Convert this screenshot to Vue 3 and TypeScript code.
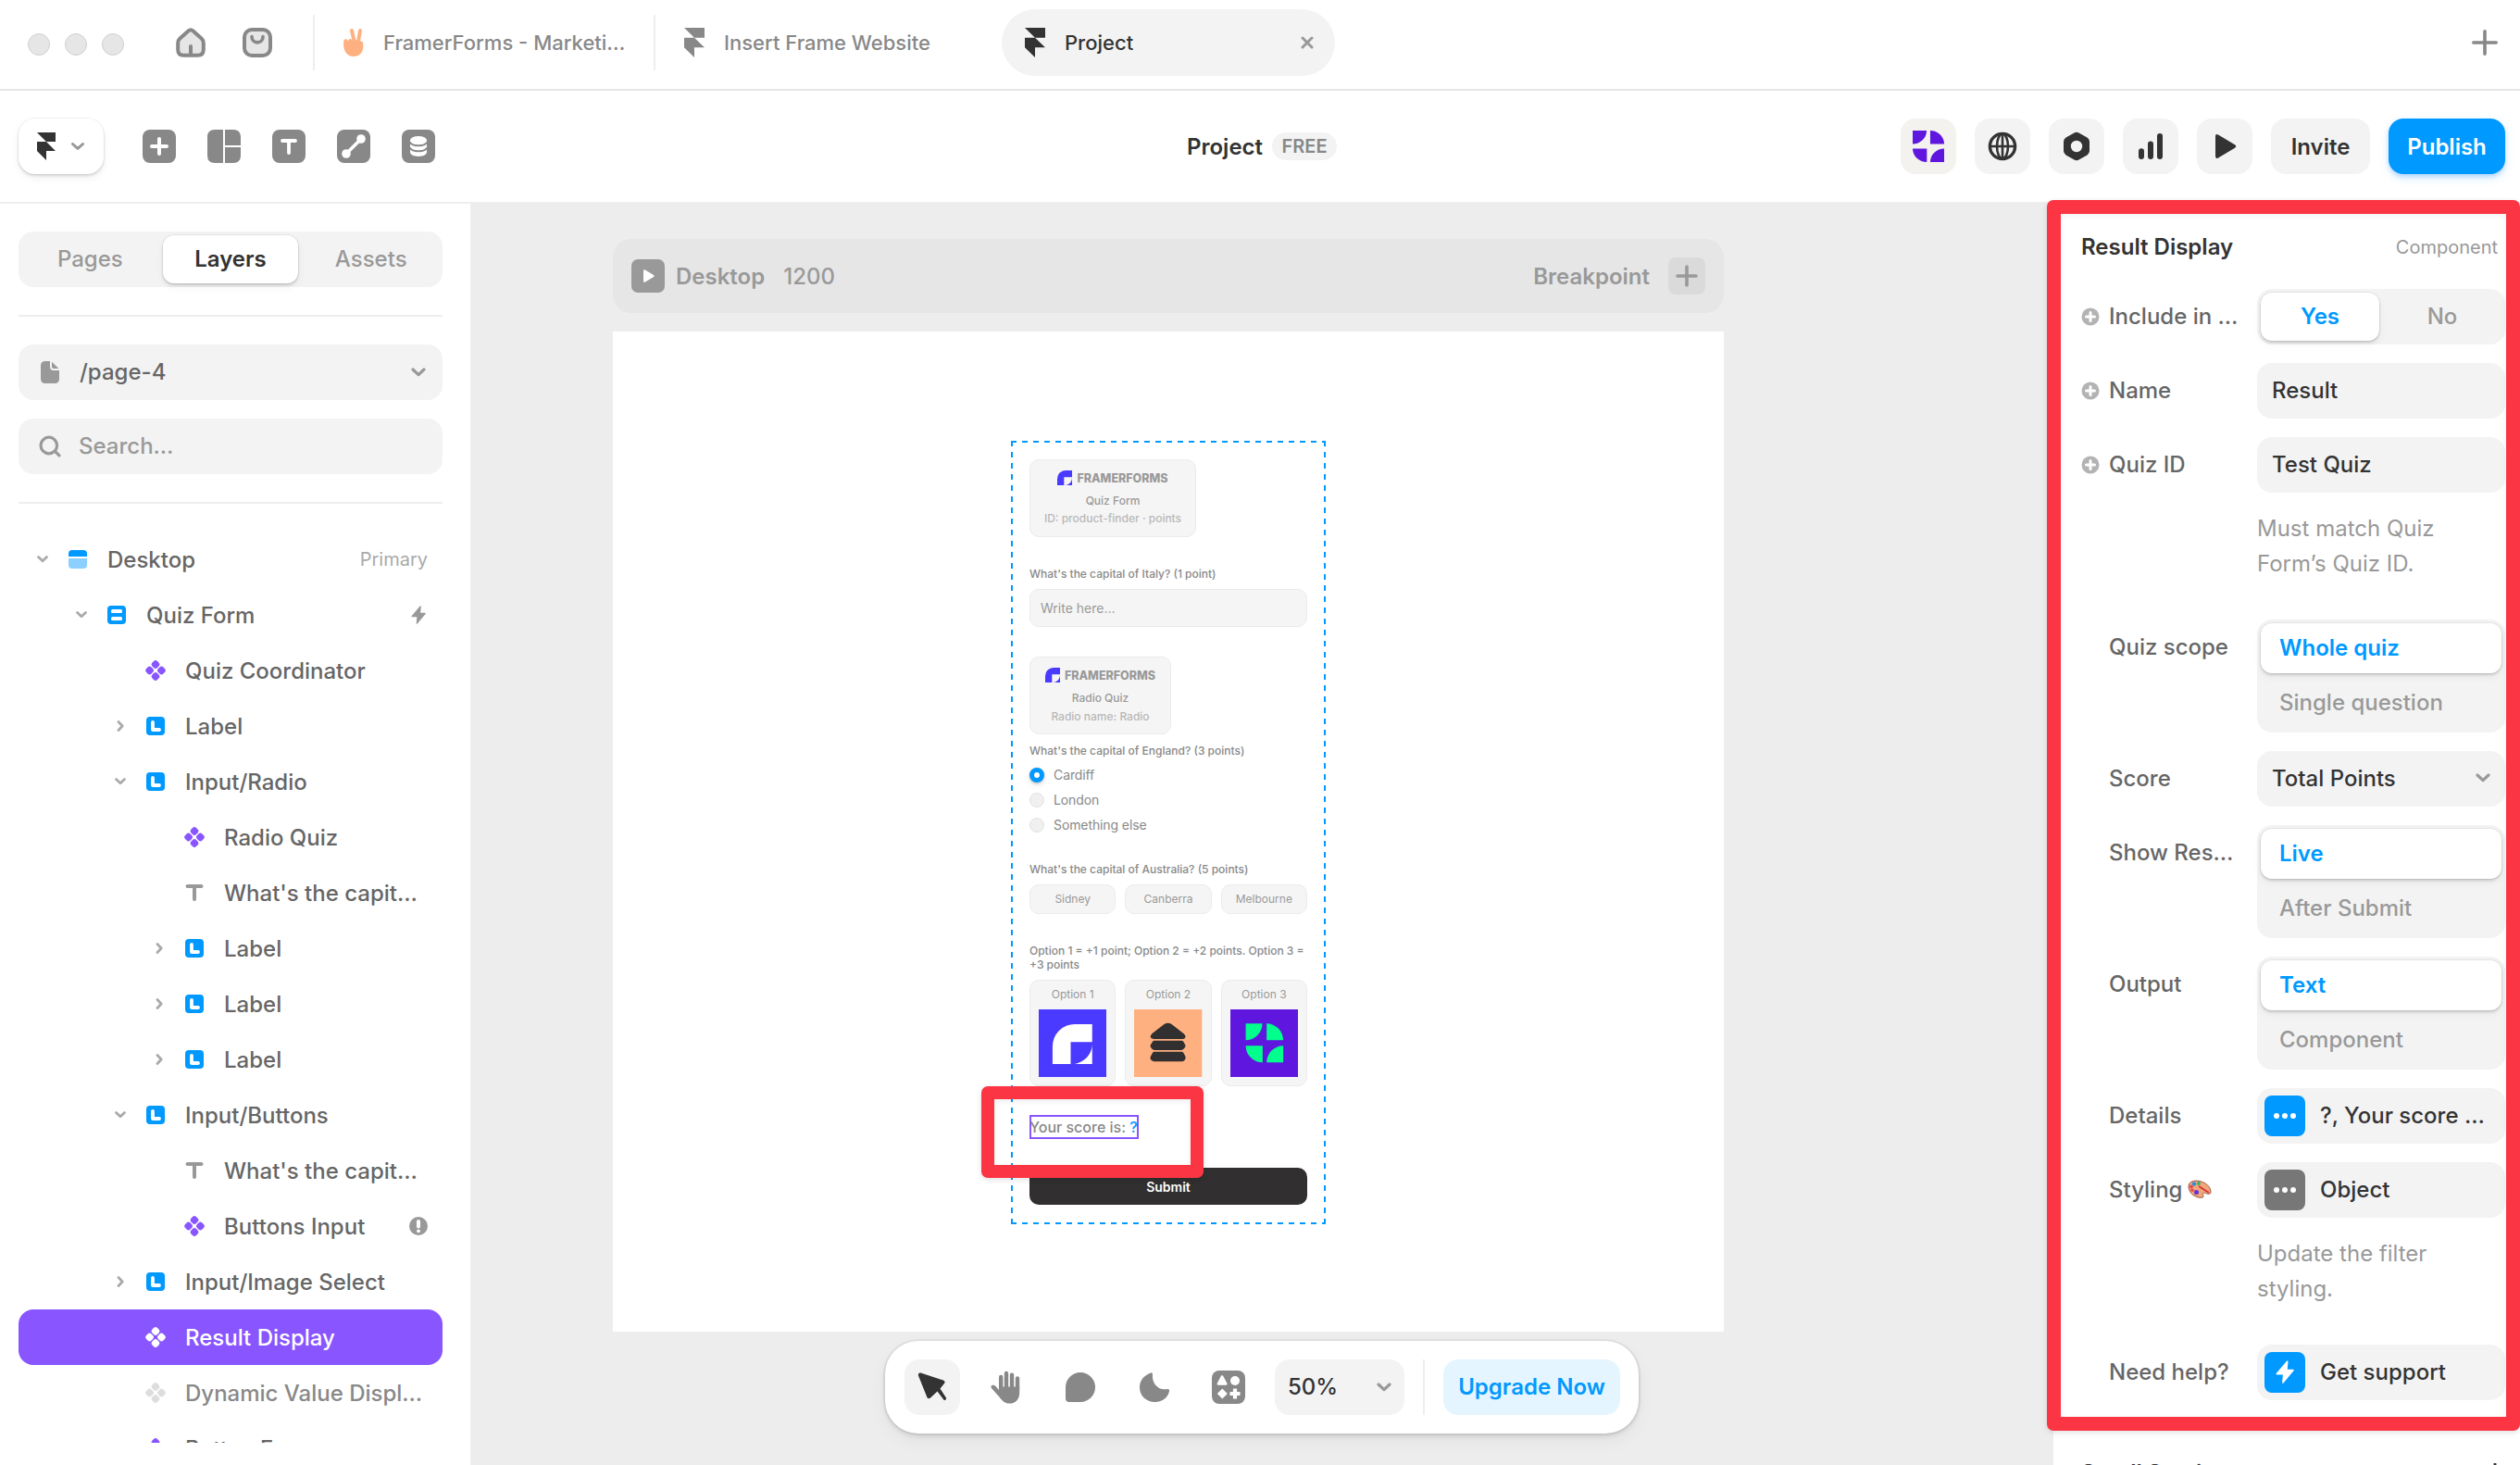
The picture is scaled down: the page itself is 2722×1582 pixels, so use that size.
<script setup lang="ts">
type RowIcon = 'page' | 'form' | 'component' | 'frame' | 'text'

interface TreeRow {
  label: string
  level: number
  icon: RowIcon
  chevron?: 'open' | 'closed'
  note?: string
  badge?: 'bolt' | 'alert'
  selected?: boolean
  hidden?: boolean
}

const tree: TreeRow[] = [
  { label: 'Desktop', level: 0, icon: 'page', chevron: 'open', note: 'Primary' },
  { label: 'Quiz Form', level: 1, icon: 'form', chevron: 'open', badge: 'bolt' },
  { label: 'Quiz Coordinator', level: 2, icon: 'component' },
  { label: 'Label', level: 2, icon: 'frame', chevron: 'closed' },
  { label: 'Input/Radio', level: 2, icon: 'frame', chevron: 'open' },
  { label: 'Radio Quiz', level: 3, icon: 'component' },
  { label: "What's the capit…", level: 3, icon: 'text' },
  { label: 'Label', level: 3, icon: 'frame', chevron: 'closed' },
  { label: 'Label', level: 3, icon: 'frame', chevron: 'closed' },
  { label: 'Label', level: 3, icon: 'frame', chevron: 'closed' },
  { label: 'Input/Buttons', level: 2, icon: 'frame', chevron: 'open' },
  { label: "What's the capit…", level: 3, icon: 'text' },
  { label: 'Buttons Input', level: 3, icon: 'component', badge: 'alert' },
  { label: 'Input/Image Select', level: 2, icon: 'frame', chevron: 'closed' },
  { label: 'Result Display', level: 2, icon: 'component', selected: true },
  { label: 'Dynamic Value Displ…', level: 2, icon: 'component', hidden: true },
  { label: 'Button Form', level: 2, icon: 'component' },
]

const radios = ['Cardiff', 'London', 'Something else']
const cities = ['Sidney', 'Canberra', 'Melbourne']

const framerMark = 'M0 0H20V10H10ZM0 10H10L20 20H10V30L0 20Z'
const formsMark = 'M0 129V72A72 72 0 0 1 72 0H129V58H59V129ZM129 64C129 100 100 126 70 129H129Z'
const cloverMark =
  'M0 0H54A54 54 0 0 1 0 54ZM68 0A54 54 0 0 1 122 54H68ZM0 72H55V126A55 54 0 0 1 0 72ZM122 72V126H68A54 54 0 0 1 122 72Z'
const boltMark = 'M9.6 0.6L0.6 11.2Q0 12.2 1.2 12.3H6.3L5.7 19.2Q5.8 20.4 6.8 19.5L15.6 9Q16.3 7.9 15 7.8H10.2L10.8 1Q10.6 -0.2 9.6 0.6Z'
</script>

<template>
  <div class="app">
    <header class="tabbar">
      <div class="lights"><i></i><i></i><i></i></div>
      <svg class="home" width="32" height="32" viewBox="0 0 32 32">
        <path d="M13.6 3.2Q16 1.2 18.4 3.2L27.6 11.4Q29.8 13.4 29.8 16.4V23.5Q29.8 29.8 23.5 29.8H8.5Q2.2 29.8 2.2 23.5V16.4Q2.2 13.4 4.4 11.4Z" fill="#e6e6e6" stroke="#888" stroke-width="4" stroke-linejoin="round" />
        <path d="M16 20V29" stroke="#888" stroke-width="4" stroke-linecap="round" />
      </svg>
      <svg class="store" width="32" height="32" viewBox="0 0 32 32">
        <rect x="2" y="2" width="28" height="28" rx="8" fill="#e6e6e6" stroke="#888" stroke-width="4" />
        <path d="M10 9.5C10 18 22 18 22 9.5" fill="none" stroke="#888" stroke-width="3.6" stroke-linecap="round" />
      </svg>
      <div class="tabrule first"></div>
      <div class="tab">
        <svg class="tabicon" width="22" height="32" viewBox="0 0 22 32">
          <g stroke="#ffb080" stroke-linecap="round" fill="none">
            <path d="M9 3L12 16" stroke-width="4" />
            <path d="M18 3L15.8 16" stroke-width="4" />
            <path d="M7.4 14V18" stroke-width="4" />
            <path d="M2.5 14.5V20" stroke-width="4.4" />
          </g>
          <path d="M0.5 17C0.5 13 21.3 12 21.3 17V21C21 27 16.8 31 11 31C4.5 31 .5 26 .5 20Z" fill="#ffb080" />
        </svg>
        <span class="t1">FramerForms - Marketi…</span>
      </div>
      <div class="tabrule"></div>
      <div class="tab">
        <svg class="tabicon" width="22" height="32" viewBox="0 0 20 30" preserveAspectRatio="none"><path :d="framerMark" fill="#888" /></svg>
        <span>Insert Frame Website</span>
      </div>
      <div class="tabrule clear"></div>
      <div class="tab active">
        <svg class="tabicon" width="22" height="32" viewBox="0 0 20 30" preserveAspectRatio="none"><path :d="framerMark" fill="#333" /></svg>
        <span>Project</span>
        <svg class="close" width="14" height="14" viewBox="0 0 14 14"><path d="M2 2L12 12M12 2L2 12" stroke="#999" stroke-width="3" stroke-linecap="round" /></svg>
      </div>
      <svg class="newtab" width="28" height="28" viewBox="0 0 28 28"><path d="M14 1.8V26.2M1.8 14H26.2" stroke="#888" stroke-width="3.6" stroke-linecap="round" /></svg>
    </header>

    <div class="toolbar">
      <div class="menu">
        <svg width="20" height="30" viewBox="0 0 20 30"><path :d="framerMark" fill="#333" /></svg>
        <svg width="14" height="8" viewBox="0 0 14 8"><path d="M1.5 1.5L7 6.4L12.5 1.5" class="chev" /></svg>
      </div>
      <div class="tools">
        <svg width="36" height="36" viewBox="0 0 36 36">
          <rect width="36" height="36" rx="8" fill="#888" />
          <path d="M18 10V26M10 18H26" stroke="#fff" stroke-width="4" stroke-linecap="round" />
        </svg>
        <svg width="36" height="36" viewBox="0 0 36 36" fill="#888">
          <path d="M8 0H17V36H8Q0 36 0 28V8Q0 0 8 0ZM19 0H28Q36 0 36 8V17H19ZM19 19H36V28Q36 36 28 36H19Z" />
        </svg>
        <svg width="36" height="36" viewBox="0 0 36 36">
          <rect width="36" height="36" rx="8" fill="#888" />
          <path d="M11 12H25M18 12V25" stroke="#fff" stroke-width="3.8" stroke-linecap="round" />
        </svg>
        <svg width="36" height="36" viewBox="0 0 36 36">
          <rect width="36" height="36" rx="8" fill="#888" />
          <path d="M10 26L26 10" stroke="#fff" stroke-width="3.6" />
          <circle cx="10" cy="26" r="4.8" fill="#fff" />
          <circle cx="26" cy="10" r="4.8" fill="#fff" />
        </svg>
        <svg width="36" height="36" viewBox="0 0 36 36">
          <rect width="36" height="36" rx="8" fill="#888" />
          <path d="M9 11.5V24C9 30.5 27 30.5 27 24V11.5Z" fill="#fff" />
          <ellipse cx="18" cy="11.5" rx="9" ry="4.5" fill="#fff" />
          <path d="M9 13.5C10.5 18.5 25.5 18.5 27 13.5M9 19.5C10.5 24.5 25.5 24.5 27 19.5" fill="none" stroke="#888" stroke-width="2" />
        </svg>
      </div>
      <div class="title"><span>Project</span><em>FREE</em></div>
      <div class="actions">
        <div class="sq warm">
          <svg width="34" height="34" viewBox="0 0 122 126" preserveAspectRatio="none"><path :d="cloverMark" fill="#5f17e0" /></svg>
        </div>
        <div class="sq">
          <svg width="32" height="32" viewBox="0 0 32 32" fill="none" stroke="#333">
            <circle cx="16" cy="16" r="13.6" stroke-width="3.4" />
            <ellipse cx="16" cy="16" rx="6" ry="13.6" stroke-width="2.6" />
            <path d="M3 16H29M16 3V29" stroke-width="2.6" />
          </svg>
        </div>
        <div class="sq">
          <svg width="30" height="32" viewBox="0 0 30 32">
            <path d="M12.5 1.5Q15 0 17.5 1.5L26.5 6.6Q29 8.2 29 11V21Q29 23.8 26.5 25.4L17.5 30.5Q15 32 12.5 30.5L3.5 25.4Q1 23.8 1 21V11Q1 8.2 3.5 6.6Z" fill="#333" />
            <circle cx="15" cy="16" r="6.2" fill="#f3f3f3" />
          </svg>
        </div>
        <div class="sq">
          <svg width="28" height="28" viewBox="0 0 28 28" stroke="#333" stroke-width="6" stroke-linecap="round">
            <path d="M4 19.2V25M14 11.5V25M24 3V25" />
          </svg>
        </div>
        <div class="sq">
          <svg width="26" height="28" viewBox="0 0 26 28"><path d="M3 3.5Q3 0 6 1.6L24 12.3Q26.5 14 24 15.7L6 26.4Q3 28 3 24.5Z" fill="#333" /></svg>
        </div>
        <div class="btn invite">Invite</div>
        <div class="btn publish">Publish</div>
      </div>
    </div>

    <main class="work">
      <aside class="left">
        <div class="seg3"><span class="before">Pages</span><span class="on">Layers</span><span class="after">Assets</span></div>
        <hr />
        <div class="box page">
          <svg width="20" height="24" viewBox="0 0 20 24" fill="#999">
            <path d="M5 0H10V6Q10 10 14 10H20V19Q20 24 15 24H5Q0 24 0 19V5Q0 0 5 0Z" />
            <path d="M12 0.8L19.4 8H14Q12 8 12 6Z" />
          </svg>
          <span>/page-4</span>
          <svg class="end" width="16" height="10" viewBox="0 0 16 10"><path d="M2 2L8 7.6L14 2" class="chev thick" /></svg>
        </div>
        <div class="box search">
          <svg width="24" height="24" viewBox="0 0 24 24" fill="none" stroke="#999" stroke-width="3.2" stroke-linecap="round">
            <circle cx="10.8" cy="11" r="8.8" />
            <path d="M17.5 17.5L22 21.8" />
          </svg>
          <span>Search…</span>
        </div>
        <hr class="second" />
        <div class="tree">
          <div
            v-for="(row, i) in tree"
            :key="i"
            class="row"
            :class="['lv' + row.level, { selected: row.selected, dim: row.hidden }]"
          >
            <span class="caret">
              <svg v-if="row.chevron === 'open'" width="12" height="8" viewBox="0 0 12 8"><path d="M1.5 1.6L6 5.8L10.5 1.6" class="chev lite" /></svg>
              <svg v-else-if="row.chevron === 'closed'" width="8" height="12" viewBox="0 0 8 12"><path d="M2 1.5L6.2 6L2 10.5" class="chev lite" /></svg>
            </span>
            <span class="ico">
              <svg v-if="row.icon === 'page'" width="20" height="20" viewBox="0 0 20 20">
                <path d="M4 0H16Q20 0 20 4V7H0V4Q0 0 4 0Z" fill="#09f" />
                <path d="M0 9H20V16Q20 20 16 20H4Q0 20 0 16Z" fill="#8cd0ff" />
              </svg>
              <svg v-else-if="row.icon === 'form'" width="20" height="20" viewBox="0 0 20 20">
                <rect width="20" height="20" rx="4" fill="#09f" />
                <rect x="4" y="4" width="12" height="4" rx="1.6" fill="#fff" />
                <rect x="4" y="12" width="12" height="4" rx="1.6" fill="#fff" />
              </svg>
              <svg v-else-if="row.icon === 'component'" width="24" height="24" viewBox="0 0 24 24" fill="currentColor">
                <g transform="rotate(45 12 12)">
                  <rect x="3.6" y="3.6" width="7.7" height="7.7" rx="2.8" />
                  <rect x="12.7" y="3.6" width="7.7" height="7.7" rx="2.8" />
                  <rect x="3.6" y="12.7" width="7.7" height="7.7" rx="2.8" />
                  <rect x="12.7" y="12.7" width="7.7" height="7.7" rx="2.8" />
                </g>
              </svg>
              <svg v-else-if="row.icon === 'frame'" width="20" height="20" viewBox="0 0 20 20">
                <rect width="20" height="20" rx="4" fill="#09f" />
                <path d="M7 6V14H14" fill="none" stroke="#fff" stroke-width="3.8" stroke-linecap="round" stroke-linejoin="round" />
              </svg>
              <svg v-else width="20" height="20" viewBox="0 0 20 20"><path d="M2.5 3H17.5M10 3V17" stroke="#999" stroke-width="4" stroke-linecap="round" /></svg>
            </span>
            <span class="name">{{ row.label }}</span>
            <span v-if="row.note" class="note">{{ row.note }}</span>
            <svg v-if="row.badge === 'bolt'" class="badge bolt" width="16" height="20" viewBox="0 0 16 20"><path :d="boltMark" fill="#999" /></svg>
            <svg v-if="row.badge === 'alert'" class="badge" width="20" height="20" viewBox="0 0 20 20">
              <circle cx="10" cy="10" r="10" fill="#999" />
              <path d="M10 5V10.5" stroke="#fff" stroke-width="4" stroke-linecap="round" />
              <circle cx="10" cy="15.3" r="1.9" fill="#fff" />
            </svg>
          </div>
        </div>
      </aside>

      <section class="canvas">
        <div class="bp">
          <svg width="36" height="36" viewBox="0 0 36 36"><rect width="36" height="36" rx="7" fill="#999" /><path d="M13 12.6Q13 10.5 15 11.6L24 17Q25.5 18 24 19L15 24.4Q13 25.5 13 23.4Z" fill="#fff" /></svg>
          <b>Desktop</b>
          <span class="size">1200</span>
          <b class="bpt">Breakpoint</b>
          <span class="add"><svg width="24" height="24" viewBox="0 0 24 24"><path d="M12 2V22M2 12H22" stroke="#999" stroke-width="3.6" stroke-linecap="round" /></svg></span>
        </div>
        <div class="frame">
          <div class="form">
            <div class="card one">
              <div class="brand"><svg width="16" height="16" viewBox="0 0 129 129"><path :d="formsMark" fill="#4a3aff" /></svg><span>FRAMERFORMS</span></div>
              <p class="kind">Quiz Form</p>
              <p class="meta">ID: product-finder · points</p>
            </div>
            <p class="q q1">What's the capital of Italy? (1 point)</p>
            <div class="field">Write here…</div>
            <div class="card two">
              <div class="brand"><svg width="16" height="16" viewBox="0 0 129 129"><path :d="formsMark" fill="#4a3aff" /></svg><span>FRAMERFORMS</span></div>
              <p class="kind">Radio Quiz</p>
              <p class="meta">Radio name: Radio</p>
            </div>
            <p class="q q2">What's the capital of England? (3 points)</p>
            <div class="radios">
              <div v-for="(r, i) in radios" :key="r" class="radio"><i :class="{ on: i === 0 }"></i><span>{{ r }}</span></div>
            </div>
            <p class="q q3">What's the capital of Australia? (5 points)</p>
            <div class="cols cities"><div v-for="c in cities" :key="c">{{ c }}</div></div>
            <p class="q q4">Option 1 = +1 point; Option 2 = +2 points. Option 3 =<br />+3 points</p>
            <div class="cols options">
              <div>
                <span>Option 1</span>
                <svg viewBox="0 0 221 219" preserveAspectRatio="none"><rect width="221" height="219" fill="#4a3aff" /><path :d="formsMark" transform="translate(45 48)" fill="#fff" /></svg>
              </div>
              <div>
                <span>Option 2</span>
                <svg viewBox="0 0 221 219" preserveAspectRatio="none">
                  <rect width="221" height="219" fill="#ffb080" />
                  <g fill="#312f30">
                    <path d="M98 48Q110 40 122 48L161 78Q170 86 166 92Q164 96 156 96H64Q55 95 53 89Q53 84 59 78Z" />
                    <path d="M66 101H154Q158 101 161 105L167 116Q168 120 165 124Q160 132 154 132H66Q59 132 55 124Q52 120 53 116L60 105Q62 101 66 101Z" />
                    <path d="M66 137H154Q158 137 161 141L167 152Q168 156 167 160Q164 169 156 169H64Q56 168 53 160Q52 156 54 152L60 141Q62 137 66 137Z" />
                  </g>
                </svg>
              </div>
              <div>
                <span>Option 3</span>
                <svg viewBox="0 0 221 219" preserveAspectRatio="none"><rect width="221" height="219" fill="#5f17e0" /><path :d="cloverMark" transform="translate(50 46)" fill="#00ff8c" /></svg>
              </div>
            </div>
            <div class="score"><span>Your score is: <i>?</i></span></div>
            <div class="submit">Submit</div>
            <svg class="dashes" width="340" height="846" viewBox="0 0 340 846">
              <path d="M0 1H340M0 845H340M1 0V846M339 0V846" stroke="#09f" stroke-width="2" stroke-dasharray="6 6" />
            </svg>
            <div class="mark"></div>
          </div>
        </div>

        <div class="dock">
          <span class="sq">
            <svg width="32" height="32" viewBox="0 0 32 32"><path d="M3.5 0.5L28 8.5Q31 10 28.5 12.6L24.5 17.5L31 27.5Q31.5 30.5 28.7 30L21.5 20.5L14 27.5Q11 29.5 10 26L1 3.5Q0.5 0 3.5 0.5Z" fill="#333" /></svg>
          </span>
          <span class="sq plain">
            <svg width="36" height="36" viewBox="0 0 36 36" fill="none" stroke="#888" stroke-linecap="round">
              <path d="M12.2 7V20M18 3V20M24 4.6V20M30 8.4V20" stroke-width="4.4" />
              <path d="M10 17.5H32.2V24C32.2 31 28 35.6 21.5 35.6C15 35.6 12.5 31 9.5 27.5L2.4 19.5C-.5 16 4 14.2 6.5 17L10 21Z" fill="#888" stroke="none" />
            </svg>
          </span>
          <span class="sq plain"><svg width="32" height="32" viewBox="0 0 32 32"><path d="M16 0A16 16 0 1 1 16 32H4Q0 32 0 28V16A16 16 0 0 1 16 0Z" fill="#888" /></svg></span>
          <span class="sq plain"><svg width="34" height="32" viewBox="0 0 34 32"><path d="M12.5 0.7Q15 -0.5 15 2.2C14 12 21 20 31 18Q33.5 17.5 33 20.5C31 28 25 32 17.5 32C8 32 1 25 1 16.5C1 9 5 3.6 12.5 0.7Z" fill="#888" /></svg></span>
          <span class="sq plain">
            <svg width="36" height="36" viewBox="0 0 36 36">
              <rect width="36" height="36" rx="8" fill="#888" />
              <g fill="#fff"><path d="M10 5.6Q11 4.8 12 5.6L16.5 14Q16.8 15.8 15.5 15.8H7Q5.3 15.8 5.7 14Z" /><circle cx="25" cy="11" r="5" /><path d="M11.3 19.5L16.8 25L11.3 30.5L5.8 25Z" /><path d="M22.9 19.5H27.1V22.9H30.5V27.1H27.1V30.5H22.9V27.1H19.5V22.9H22.9Z" /></g>
            </svg>
          </span>
          <span class="zoom">50%<svg width="16" height="10" viewBox="0 0 16 10"><path d="M2 2L8 7.6L14 2" class="chev thick" /></svg></span>
          <i class="rule"></i>
          <span class="upgrade">Upgrade Now</span>
        </div>
      </section>

      <aside class="right">
        <div class="head"><b>Result Display</b><span>Component</span></div>
        <div class="prop">
          <svg width="20" height="20" viewBox="0 0 20 20"><circle cx="10" cy="10" r="9.5" fill="#b3b3b3" /><path d="M10 5.5V14.5M5.5 10H14.5" stroke="#fff" stroke-width="3" stroke-linecap="round" /></svg>
          <label>Include in …</label>
          <div class="ctl seg2"><span class="on">Yes</span><span>No</span></div>
        </div>
        <div class="prop">
          <svg width="20" height="20" viewBox="0 0 20 20"><circle cx="10" cy="10" r="9.5" fill="#b3b3b3" /><path d="M10 5.5V14.5M5.5 10H14.5" stroke="#fff" stroke-width="3" stroke-linecap="round" /></svg>
          <label>Name</label>
          <div class="ctl">Result</div>
        </div>
        <div class="prop">
          <svg width="20" height="20" viewBox="0 0 20 20"><circle cx="10" cy="10" r="9.5" fill="#b3b3b3" /><path d="M10 5.5V14.5M5.5 10H14.5" stroke="#fff" stroke-width="3" stroke-linecap="round" /></svg>
          <label>Quiz ID</label>
          <div class="ctl">Test Quiz</div>
        </div>
        <p class="help">Must match Quiz<br />Form’s Quiz ID.</p>
        <div class="prop tall"><label>Quiz scope</label><div class="ctl stack"><span class="on">Whole quiz</span><span>Single question</span></div></div>
        <div class="prop">
          <label>Score</label>
          <div class="ctl">Total Points<svg class="end" width="16" height="10" viewBox="0 0 16 10"><path d="M2 2L8 7.6L14 2" class="chev thick" /></svg></div>
        </div>
        <div class="prop tall"><label>Show Res…</label><div class="ctl stack"><span class="on">Live</span><span>After Submit</span></div></div>
        <div class="prop tall"><label>Output</label><div class="ctl stack"><span class="on">Text</span><span>Component</span></div></div>
        <div class="prop">
          <label>Details</label>
          <div class="ctl icon"><span class="chip blue"><i></i><i></i><i></i></span>?, Your score …</div>
        </div>
        <div class="prop">
          <label>Styling
            <svg class="palette" width="26" height="20" viewBox="0 0 26 20">
              <path d="M1 7C1 2 7 0 13 1.5C20 3 25 8 25 13C25 16 22 16 19.5 14.5C17 13.5 15.5 15 17 17C18 19.5 14 20 10 18.5C4 16.5 1 12 1 7Z" fill="#f0a878" stroke="#a05a4a" stroke-width="1" />
              <circle cx="4" cy="7.5" r="2" fill="#e5484d" /><circle cx="7" cy="4.5" r="2.2" fill="#2f8ee0" /><circle cx="12" cy="4" r="1.9" fill="#2fb56a" />
              <circle cx="9.5" cy="13.5" r="2.6" fill="#6a35d0" /><circle cx="5" cy="11.3" r="1.7" fill="#e5484d" /><path d="M12 7L23 14" stroke="#d8343c" stroke-width="2" />
            </svg>
          </label>
          <div class="ctl icon"><span class="chip gray"><i></i><i></i><i></i></span>Object</div>
        </div>
        <p class="help">Update the filter<br />styling.</p>
        <div class="prop">
          <label>Need help?</label>
          <div class="ctl icon"><span class="chip blue"><svg width="20" height="25" viewBox="0 0 16 20"><path :d="boltMark" fill="#fff" /></svg></span>Get support</div>
        </div>
        <div class="next"><b>Scroll Section</b><svg width="20" height="20" viewBox="0 0 20 20"><path d="M10 1V19M1 10H19" stroke="#333" stroke-width="3" stroke-linecap="round" /></svg></div>
        <div class="outline"></div>
      </aside>
    </main>
  </div>
</template>

<style>
html,
body {
  margin: 0;
  overflow: hidden;
}
</style>

<style scoped>
.app {
  width: 2722px;
  height: 1582px;
  overflow: hidden;
  display: flex;
  flex-direction: column;
  background: #fff;
  font-family: Inter, "Liberation Sans", sans-serif;
  font-size: 24px;
  font-weight: 500;
  color: #333;
  white-space: nowrap;
}
.app * { box-sizing: border-box; }
svg { display: block; flex: none; }
p { margin: 0; }
i { font-style: normal; }
.chev { fill: none; stroke: #999; stroke-width: 3; stroke-linecap: round; stroke-linejoin: round; }
.chev.thick { stroke-width: 3.2; }
.chev.lite { stroke: #aaa; stroke-width: 2.8; }

.tabbar {
  height: 98px;
  flex: none;
  border-bottom: 2px solid #e6e6e6;
  display: flex;
  align-items: flex-start;
  padding-left: 30px;
  font-size: 22px;
  color: #888;
}
.lights { display: flex; gap: 16px; margin-top: 36px; width: 160px; }
.lights i { width: 24px; height: 24px; border-radius: 50%; background: #e6e6e6; border: 1px solid #d0d0d0; }
.home { margin-top: 30px; }
.store { margin: 30px 44px 0 40px; }
.tabrule { width: 2px; height: 60px; margin: 16px 6px 0 0; background: #eee; }
.tabrule.clear { background: transparent; }
.tab { width: 360px; height: 72px; margin-top: 10px; padding: 0 23px 0 25px; border-radius: 36px; display: flex; align-items: center; }
.tab span { margin-left: 21px; }
.tab.active { background: #f3f3f3; color: #333; }
.close { margin-left: auto; }
.newtab { margin: 32px 24px 0 auto; }

.toolbar { height: 122px; flex: none; border-bottom: 2px solid #eee; padding: 0 16px 0 20px; display: flex; align-items: center; }
.menu { width: 92px; height: 60px; border-radius: 18px; background: #fff; display: flex; align-items: center; padding-left: 20px; gap: 17px; box-shadow: 0 0 0 1px rgba(0, 0, 0, .04), 0 2px 3px rgba(0, 0, 0, .12), 0 4px 10px rgba(0, 0, 0, .06); }
.tools { display: flex; gap: 34px; margin-left: 42px; }
.title { margin-left: 812px; display: flex; align-items: center; font-weight: 600; gap: 10px; }
.title em { font-style: normal; font-size: 20px; color: #888; background: #f3f3f3; height: 30px; width: 70px; border-radius: 15px; display: flex; align-items: center; justify-content: center; }
.actions { margin-left: auto; display: flex; gap: 20px; }
.sq { width: 60px; height: 60px; border-radius: 16px; background: #f3f3f3; display: flex; align-items: center; justify-content: center; }
.sq.warm { background: #f3f2ee; }
.sq.plain { background: none; }
.btn { height: 60px; border-radius: 16px; display: flex; align-items: center; justify-content: center; font-weight: 600; }
.invite { width: 107px; background: #f3f3f3; }
.publish { width: 126px; background: #09f; color: #fff; box-shadow: 0 3px 4px rgba(0, 110, 255, .2), 0 4px 12px rgba(0, 153, 255, .15); }

.work { flex: 1; min-height: 0; display: flex; }
.left { width: 510px; flex: none; border-right: 2px solid #eee; padding: 30px 30px 0 20px; display: flex; flex-direction: column; }
.left hr { margin: 30px 0; border: 0; height: 2px; width: 100%; flex: none; background: #eee; }
.seg3 { height: 60px; flex: none; padding: 4px; border-radius: 16px; background: #f3f3f3; display: flex; gap: 2px; color: #999; }
.seg3 span, .seg2 span { flex: 1 1 0; display: flex; align-items: center; justify-content: center; border-radius: 12px; padding-bottom: 1px; }
.seg3 .before { padding-right: 3px; }
.seg3 .after { padding-left: 3px; }
.on { background: #fff; box-shadow: 0 0 0 1px rgba(0, 0, 0, .05), 0 2px 3px rgba(0, 0, 0, .14), 0 4px 10px rgba(0, 0, 0, .05); font-weight: 600; }
.seg3 .on { color: #333; }
.box { height: 60px; flex: none; border-radius: 16px; background: #f3f3f3; display: flex; align-items: center; }
.box span { padding-bottom: 1px; }
.page { padding: 0 18px 0 24px; color: #666; }
.page span { margin-left: 22px; }
.search { margin-top: 20px; padding-left: 22px; color: #999; }
.search span { margin-left: 19px; }
.end { margin-left: auto; }
.tree { height: 984px; overflow: hidden; }
.row { height: 60px; display: flex; align-items: center; color: #666; border-radius: 16px; padding-right: 16px; }
.lv0 { padding-left: 14px; }
.lv1 { padding-left: 56px; }
.lv2 { padding-left: 98px; }
.lv3 { padding-left: 140px; }
.caret { width: 24px; display: flex; justify-content: center; }
.ico { width: 24px; margin: 0 20px 0 14px; display: flex; justify-content: center; color: #85f; }
.note { margin-left: auto; font-size: 20px; font-weight: 400; color: #aaa; }
.badge { margin-left: auto; }
.badge.bolt { margin-right: 2px; }
.selected { background: #85f; color: #fff; }
.selected .ico { color: #fff; }
.dim { color: #888; }
.dim .ico { color: #ddd; }

.canvas { flex: 1; background: #ededed; position: relative; padding: 38px 356px 0 152px; display: flex; flex-direction: column; }
.bp { height: 80px; flex: none; border-radius: 20px; background: #e6e6e6; color: #999; display: flex; align-items: center; padding: 0 20px; }
.bp b { font-weight: 600; margin-left: 12px; }
.bp .size { margin-left: 20px; }
.bp b.bpt { margin-left: auto; }
.add { width: 40px; height: 40px; margin-left: 20px; border-radius: 8px; background: #dadada; display: flex; align-items: center; justify-content: center; }
.frame { margin-top: 20px; height: 1080px; flex: none; background: #fff; padding: 118px 430px 0; }
.form { width: 340px; height: 846px; padding: 20px 20px 0; position: relative; font-size: 12px; color: #888; display: flex; flex-direction: column; align-items: stretch; }
.card { height: 84px; flex: none; border-radius: 10px; border: 1px solid #ebebeb; background: #f5f5f5; display: flex; flex-direction: column; align-items: center; padding-top: 11px; color: #999; }
.card.one { width: 180px; }
.card.two { width: 153px; margin-top: 32px; }
.brand { display: flex; align-items: center; gap: 5px; height: 16px; font-size: 12.5px; font-weight: 800; }
.kind { margin-top: 9px; line-height: 16px; }
.meta { margin-top: 3px; line-height: 16px; color: #b8b8b8; }
.card.two .meta { margin-top: 4px; }
.q { line-height: 15px; }
.q1 { margin-top: 32px; }
.q2 { margin-top: 10px; }
.q3 { margin-top: 27px; }
.q4 { margin-top: 32px; }
.field { margin-top: 9px; height: 41px; border-radius: 10px; border: 1px solid #ebebeb; background: #f5f5f5; display: flex; align-items: center; padding-left: 11px; font-size: 14px; font-weight: 400; color: #999; }
.radios { margin-top: 5px; font-size: 14px; font-weight: 400; letter-spacing: -.1px; }
.radio { height: 27px; display: flex; align-items: center; gap: 10px; }
.radio i { width: 16px; height: 16px; border-radius: 50%; background: #f0f0f0; border: 1px solid #e2e2e2; }
.radio i.on { background: #fff; border: 5px solid #09f; }
.cols { display: grid; grid-template-columns: repeat(3, 1fr); gap: 10px; font-weight: 400; color: #999; }
.cols > div { border-radius: 10px; border: 1px solid #ebebeb; background: #f5f5f5; display: flex; align-items: center; justify-content: center; }
.cities { margin-top: 9px; }
.cities > div { height: 32px; padding-bottom: 1px; }
.options { margin-top: 9px; }
.options > div { height: 115px; flex-direction: column; justify-content: flex-start; padding: 7px 9px 0; }
.options span { line-height: 16px; }
.options svg { width: 100%; height: 73px; margin-top: 8px; }
.score { margin-top: 31px; height: 26px; width: 118px; border: 2px solid #85f; font-size: 16px; display: flex; align-items: center; white-space: pre; }
.score span { margin-left: -2px; }
.score i { color: #09f; }
.submit { margin-top: 31px; height: 40px; border-radius: 10px; background: #312f30; color: #fff; font-size: 14px; font-weight: 600; display: flex; align-items: center; justify-content: center; }
.dashes { position: absolute; left: 0; top: 0; }
.mark { position: absolute; left: -32px; top: 697px; width: 240px; height: 99px; border: 14px solid #fb3543; border-radius: 7px; box-shadow: 0 2px 6px rgba(0, 0, 0, .12), inset 0 2px 6px rgba(0, 0, 0, .08); }

.dock { position: absolute; left: 446px; top: 1228px; width: 814px; height: 100px; border-radius: 36px; background: #fff; display: flex; align-items: center; gap: 20px; padding: 0 20px 0 21px; box-shadow: 0 0 0 2px rgba(0, 0, 0, .05), 0 3px 5px rgba(0, 0, 0, .1), 0 8px 20px rgba(0, 0, 0, .05); }
.zoom { width: 140px; height: 60px; border-radius: 16px; background: #f3f3f3; display: flex; align-items: center; justify-content: space-between; padding: 0 14px 1px 14px; }
.rule { width: 2px; height: 60px; background: #eee; }
.upgrade { width: 191px; height: 60px; padding-bottom: 1px; border-radius: 16px; background: #e5f5ff; color: #09f; font-weight: 600; display: flex; align-items: center; justify-content: center; }
.dock .sq { flex: none; }

.right { width: 504px; flex: none; background: #fff; padding: 25px 16px 0 30px; position: relative; }
.head { height: 42px; display: flex; align-items: center; justify-content: space-between; padding-right: 8px; margin-bottom: 25px; }
.head b { font-weight: 600; }
.head span { font-size: 20px; font-weight: 400; color: #999; padding-top: 2px; }
.prop { display: flex; align-items: center; margin-bottom: 20px; color: #666; }
.prop.tall { align-items: flex-start; }
.prop.tall label { line-height: 60px; padding-bottom: 0; }
.prop > svg { margin-right: -20px; }
.prop label { margin-left: 30px; flex: 1; display: flex; align-items: center; padding-bottom: 2px; }
.palette { margin-left: 6px; }
.ctl { width: 268px; height: 60px; flex: none; border-radius: 16px; background: #f3f3f3; color: #333; display: flex; align-items: center; padding: 0 16px 2px; }
.seg2 { padding: 4px; align-items: stretch; color: #999; gap: 4px; }
.seg2 span { padding-bottom: 2px; }
.seg2 .on, .stack .on { color: #09f; }
.stack { height: 122px; flex-direction: column; align-items: stretch; padding: 4px 4px 5px; gap: 5px; color: #999; }
.stack span { height: 54px; border-radius: 12px; display: flex; align-items: center; padding: 0 0 1px 20px; }
.icon { padding: 0 8px 1px; }
.chip { width: 44px; height: 44px; border-radius: 8px; margin-right: 16px; display: flex; align-items: center; justify-content: center; gap: 3px; }
.chip i { width: 6px; height: 6px; border-radius: 50%; background: #fff; }
.blue { background: #09f; }
.gray { background: #777; }
.help { margin: 0 0 41px 190px; color: #999; font-weight: 400; line-height: 38px; }
.next { display: flex; align-items: center; justify-content: space-between; height: 42px; margin-top: 57px; padding-right: 1px; }
.next b { font-weight: 600; }
.outline { position: absolute; left: -7px; top: -4px; width: 511px; height: 1329px; border: 15px solid #fb3543; border-radius: 7px; box-shadow: 0 2px 6px rgba(0, 0, 0, .12), inset 0 2px 6px rgba(0, 0, 0, .06); }
</style>
